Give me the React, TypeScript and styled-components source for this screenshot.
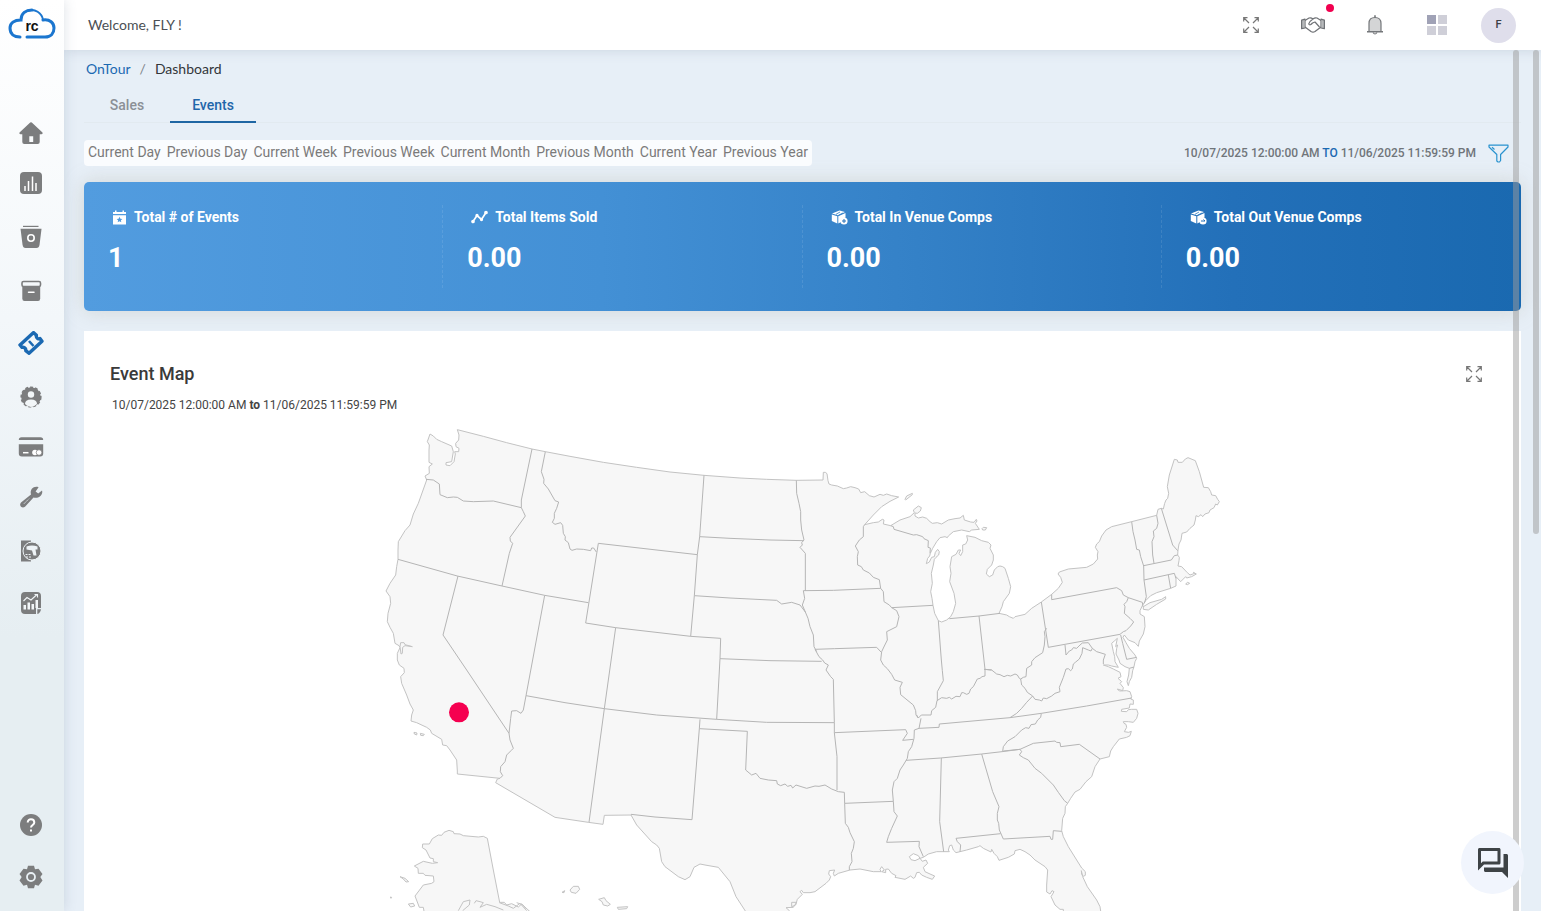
import React from "react";
import styled, { createGlobalStyle, css } from "styled-components";

const GlobalStyle = createGlobalStyle`
  *, *::before, *::after { box-sizing: border-box; }
  body { margin: 0; overflow: hidden; background: #e7eff7; font-family: Roboto, "Liberation Sans", sans-serif; }
  button { font: inherit; color: inherit; border: 0; background: none; padding: 0; cursor: pointer; }
  h2, p, dl, dd, dt, ul { margin: 0; padding: 0; }
  svg { display: block; }
`;

/* ---------- Shell ---------- */

const Shell = styled.div`
  display: flex;
  height: 100vh;
  overflow: hidden;
`;

const Sidebar = styled.nav`
  flex: 0 0 64px;
  display: flex;
  flex-direction: column;
  align-items: center;
  padding: 8px 0 22px;
  background: linear-gradient(#ffffff 0%, #f3f7fa 35%, #e6eef2 70%, #e6eef2 100%);
  box-shadow: 0 0 12px rgba(80, 100, 130, 0.2);
  z-index: 3;
`;

const NavList = styled.ul`
  list-style: none;
  display: flex;
  flex-direction: column;
  width: 64px;
`;

const MainNav = styled(NavList)`
  margin-top: 54px;
  flex: 1;
`;

const navSpace = { tight: 26, normal: 28, wide: 30 };

const NavItem = styled.li<{ $space: keyof typeof navSpace }>`
  display: flex;
  justify-content: center;
  margin-top: ${(p) => navSpace[p.$space]}px;
  height: 24px;
`;

const NavLink = styled.a<{ $active?: boolean }>`
  display: block;
  width: 26px;
  height: 24px;
  margin-right: 2px;
  color: ${(p) => (p.$active ? "#1b69b2" : "#7c7d7e")};
  svg { width: 26px; height: 24px; }
`;

const Column = styled.div`
  flex: 1;
  min-width: 0;
  display: flex;
  flex-direction: column;
`;

const TopBar = styled.header`
  flex: 0 0 50px;
  display: flex;
  align-items: center;
  justify-content: space-between;
  padding: 0 25px 0 24px;
  background: #fff;
  box-shadow: 0 0 12px rgba(80, 100, 130, 0.2);
  z-index: 2;
`;

const Welcome = styled.p`
  font: 14px/20px Lato, sans-serif;
  color: #4b4f54;
`;

const Tools = styled.div`
  display: flex;
  align-items: center;
  gap: 27px;
`;

const ToolButton = styled.button`
  position: relative;
  width: 35px;
  height: 35px;
  display: flex;
  align-items: center;
  justify-content: center;
`;

const Dot = styled.span`
  position: absolute;
  top: -4px;
  right: -4px;
  width: 8px;
  height: 8px;
  border-radius: 50%;
  background: #f1004f;
`;

const Avatar = styled(ToolButton)`
  border-radius: 50%;
  background: #dfdeeb;
  color: #3c3f45;
  font: 500 11px/16px Roboto, sans-serif;
`;

/* ---------- Content ---------- */

const Content = styled.main`
  position: relative;
  flex: 1;
  min-height: 0;
  overflow: hidden;
  padding: 8px 20px 0;
  background: #e7eff7;
`;

const ScrollThumb = styled.span<{ $outer?: boolean }>`
  position: absolute;
  top: 0;
  z-index: 4;
  width: 6px;
  border-radius: 3px;
  background: rgba(155, 155, 155, 0.5);
  ${(p) =>
    p.$outer
      ? css`right: 2px; height: 56.2%;`
      : css`right: 22px; bottom: -4px;`}
`;

const Crumbs = styled.nav`
  display: flex;
  gap: 9px;
  padding-left: 2px;
  font: 14px/22px Lato, sans-serif;
  color: #33363a;
  a { color: #1b69b2; text-decoration: none; }
  i { font-style: normal; color: #7d8389; }
`;

const Tabs = styled.div`
  display: flex;
  margin-top: 9px;
  border-bottom: 1px solid #e2eaf0;
`;

const Tab = styled.button<{ $active?: boolean }>`
  width: 86px;
  height: 34px;
  font: 500 14px/20px Roboto, sans-serif;
  color: ${(p) => (p.$active ? "#1f66aa" : "#8b9096")};
  border-bottom: 2px solid ${(p) => (p.$active ? "#1f66a3" : "transparent")};
  margin-bottom: -1px;
`;

const FilterRow = styled.div`
  display: flex;
  justify-content: space-between;
  align-items: center;
  margin-top: 17px;
  height: 26px;
  padding-right: 12px;
`;

const Periods = styled.div`
  display: flex;
  align-items: flex-start;
  gap: 6px;
  height: 26px;
  padding: 0 4px;
  border-radius: 4px;
  background: #fafcfe;
  color: #7a7a7a;
  font-size: 14px;
  line-height: 24px;
  button { white-space: nowrap; }
`;

const Range = styled.div`
  display: flex;
  align-items: center;
  gap: 12px;
  font-size: 12px;
  line-height: 20px;
  font-weight: 500;
  color: #70757a;
  b { font-weight: 500; color: #1b69b2; }
`;

const Stats = styled.dl`
  display: grid;
  grid-template-columns: repeat(4, 1fr);
  height: 129px;
  margin-top: 16px;
  padding: 23px 0;
  border-radius: 5px;
  color: #fff;
  background: linear-gradient(90deg, #529cdf, #4390d5 36%, #3481c7 58%, #2370b9 80%, #1a69b0);
  box-shadow: 0 0 20px rgba(170, 170, 155, 0.35);
`;

const Stat = styled.div`
  padding: 2px 24px 0;
  border-right: 1px dashed rgba(255, 255, 255, 0.1);
  &:last-child { border-right: 0; }
`;

const StatLabel = styled.dt`
  display: flex;
  align-items: center;
  gap: 7px;
  padding-left: 4px;
  font-size: 14px;
  line-height: 20px;
  font-weight: 700;
`;

const StatValue = styled.dd`
  margin-top: 13px;
  font-size: 27px;
  line-height: 36px;
  font-weight: 700;
`;

const Card = styled.section`
  margin-top: 20px;
  padding-top: 31px;
  background: #fff;
`;

const CardHead = styled.div`
  display: flex;
  align-items: center;
  justify-content: space-between;
  height: 24px;
  padding: 0 39px 0 26px;
  h2 { font-size: 18px; line-height: 24px; font-weight: 500; color: #3a3a3a; }
`;

const CardRange = styled.p`
  margin-top: 9px;
  padding-left: 28px;
  font-size: 12px;
  line-height: 20px;
  color: #444;
  b { font-weight: 700; }
`;

const MapBox = styled.div`
  margin-top: 5px;
  svg { width: 100%; height: auto; }
`;

const ChatButton = styled.button`
  position: absolute;
  right: 17px;
  bottom: 17px;
  z-index: 5;
  width: 63px;
  height: 63px;
  border-radius: 50%;
  display: flex;
  align-items: center;
  justify-content: center;
  background: #f1f5fd;
  color: #3e4346;
`;

/* ---------- Icons ---------- */

const Logo = () => (
  <svg width="48" height="33" viewBox="0 0 48 33" role="img" aria-label="rc">
    <g fill="none" stroke="#1b76cf" strokeWidth="3" strokeLinecap="round">
      <path d="M12 29C6 29 2 26 2 20C2 15 6 12 13 12C13 5 18 2 24 2" />
      <path d="M19 29H37C43 29 46 25 46 20C46 15 42 11 35 12" />
      <path d="M19 3C27 0 34 5 35 12" strokeWidth="2" />
    </g>
    <text x="24" y="23" textAnchor="middle" fontFamily="Liberation Sans, sans-serif" fontWeight="700" fontSize="14" fill="#111">rc</text>
  </svg>
);

const svgProps = { viewBox: "0 0 26 24", "aria-hidden": true } as const;

const HomeIcon = () => (
  <svg {...svgProps} fill="currentColor">
    <path fillRule="evenodd" d="M12.200 1.500Q13 .8 13.800 1.500L24.500 11.500Q25.200 13 23.500 13.300H21.700V21Q21.700 23 19.700 23H6.300Q4.300 23 4.300 21V13.300H2.500Q.8 13 1.500 11.500ZM11.300 15.200V21H15.200V15.200Z" />
  </svg>
);
const BarsIcon = () => (
  <svg {...svgProps}>
    <rect x="2" y="1" width="22" height="22" rx="4" fill="currentColor" />
    <path d="M7 15v5M10.500 10v10M14.500 5.500V20M18 12v8" stroke="#fff" strokeWidth="1.500" />
  </svg>
);
const BinIcon = () => (
  <svg {...svgProps} fill="currentColor">
    <path d="M5 .8H20.500V2H5Z" />
    <path d="M2.500 3.800H23.500L21.500 20Q21 23 18.500 23H7.500Q5 23 4.600 20Z" />
    <circle cx="13" cy="13" r="3.200" fill="none" stroke="#fff" strokeWidth="1.600" />
  </svg>
);
const ArchiveIcon = () => (
  <svg {...svgProps}>
    <rect x="4" y="2.500" width="18.500" height="5" rx="1.500" fill="none" stroke="currentColor" strokeWidth="1.600" />
    <path d="M4.300 8H22.200V19.500Q22.200 22 20 22H6.500Q4.300 22 4.300 19.500Z" fill="currentColor" />
    <path d="M10.500 13.300h5.500" stroke="#fff" strokeWidth="1.500" strokeLinecap="round" />
  </svg>
);
const TicketIcon = () => (
  <svg {...svgProps} fill="none" stroke="currentColor" strokeWidth="3.400" strokeLinejoin="round" strokeLinecap="round">
    <path d="M15.600 1.600L18.400 4.300Q18 6.400 19.400 7.300Q20.700 8.200 22 7.600L24 10.200L11 22.300L7.800 19.600Q8 17.800 6.700 16.800Q5.400 15.900 4 16.300L2 14Z" />
    <path d="M11 10l4.500 5" strokeWidth="2.600" strokeLinecap="butt" />
  </svg>
);
const UserBadgeIcon = () => (
  <svg {...svgProps}>
    <circle cx="13" cy="12" r="9.800" fill="currentColor" stroke="currentColor" strokeWidth="1.600" strokeDasharray="3 2" />
    <circle cx="13" cy="9.500" r="3.200" fill="#f2f6f8" />
    <path d="M7 19Q7 14.500 13 14.500Q19 14.500 19 19Q16 22 13 22Q10 22 7 19Z" fill="#f2f6f8" />
  </svg>
);
const CardIcon = () => (
  <svg {...svgProps}>
    <path d="M.800 5Q.800 2.300 3.500 2.300H22.500Q25.200 2.300 25.200 5ZM.800 9.300H25.200V18.500Q25.200 21.500 22.200 21.500H3.800Q.800 21.500.800 18.500Z" fill="currentColor" />
    <path d="M5 17.700h5.500" stroke="#fff" strokeWidth="1.500" />
    <circle cx="17" cy="17.500" r="2.800" fill="#fff" />
    <circle cx="21" cy="17.500" r="2.800" fill="#fff" stroke="currentColor" strokeWidth=".7" />
  </svg>
);
const WrenchIcon = () => (
  <svg {...svgProps}>
    <path d="M24 5.500L20.200 8.600L17.600 6.400L20.600 2.200C16.500.500 11.500 3.500 13 9.500L3 17.500C.500 20.500 4 24 7 21.700L15.500 12.600C21 14 25.500 9.500 24 5.500Z" fill="currentColor" />
    <path d="M6 18.700l5-5" stroke="#dfe6ea" strokeWidth="1" strokeDasharray="2 1" />
  </svg>
);
const ScannerIcon = () => (
  <svg {...svgProps}>
    <path d="M3 1.500H13V22.500H3Z" fill="currentColor" />
    <circle cx="14" cy="12" r="9" fill="currentColor" stroke="#eef3f6" strokeWidth="1" />
    <path d="M8.500 7.500Q14 5.500 19.500 7.500V10.500H17.500L18.500 16.500H15.500L14 11.500L8.500 10.500Z" fill="#eef3f6" />
    <path d="M7.500 15.500h5M8 18h5" stroke="#eef3f6" strokeDasharray="2 1" />
  </svg>
);
const ReportIcon = () => (
  <svg {...svgProps}>
    <path d="M7 1H19Q23 1 23 5V17H18V23H7Q3 23 3 19V5Q3 1 7 1Z" fill="currentColor" />
    <path d="M19.300 18.200H23Q22.500 22 19.300 23Z" fill="currentColor" />
    <path d="M5.500 10l3.500-3.500 4 2.500 6-5.500M16.500 3.500H19.500V6.500" fill="none" stroke="#f2f6f8" strokeWidth="1.100" />
    <path d="M5.500 14h2.500v4.500h-2.500ZM9.500 11.500h2.500v7h-2.500ZM13.500 13h2.500v5.500h-2.500ZM17.500 9h2.500v8h-2.500Z" fill="#f2f6f8" />
  </svg>
);
const HelpIcon = () => (
  <svg {...svgProps}>
    <circle cx="13" cy="12" r="11" fill="currentColor" />
    <path d="M9.700 9.600C9.700 5 16.300 5.500 16.300 9.500C16.300 12 13 12 13 14.500M13 16.500v2" fill="none" stroke="#fff" strokeWidth="2" />
  </svg>
);
const GearIcon = () => (
  <svg {...svgProps}>
    <path d="M10 .8H16L17 4.300L20.500 3.700L24.500 9L22.300 12L24.500 15.500L20.500 20.700L17 19.700L16 23.200H10L9 19.700L5.500 20.700L1.500 15.500L3.700 12L1.500 9L5.500 3.700L9 4.300Z" fill="currentColor" />
    <circle cx="13" cy="12" r="4" fill="none" stroke="#e9f0f4" strokeWidth="1.800" />
  </svg>
);

const ExpandIcon = () => (
  <svg width="16" height="16" viewBox="0 0 16 16" fill="none" stroke="#777" strokeWidth="1.200" aria-hidden>
    <path d="M.7 4.500V.7H4.500M11.500 .7h3.800V4.500M.7 11.500v3.800H4.500M11.500 15.300h3.800V11.500M1 1l5 5M15 1L10 6M1 15l5-5M15 15L10 10" />
  </svg>
);
const HandshakeIcon = () => (
  <svg width="24" height="16" viewBox="0 0 24 16" fill="none" stroke="#6f7276" strokeWidth="1.200" strokeLinejoin="round" aria-hidden>
    <path d="M.6 3.200L4 2.200V11L.6 11.600ZM23.400 3.200L20 2.200V11L23.400 11.600Z" />
    <path d="M2 3v8.500M22 3v8.500" strokeWidth="1" />
    <path d="M4 3.500L8 1Q10 .3 12 2Q14 .3 16 1L20 3.500M4 10L10 14.500Q12 15.800 14 14.500L20 10M12 2Q9 3.800 7.700 7Q9 9 11.500 6L14 5L18.500 10" />
  </svg>
);
const BellIcon = () => (
  <svg width="18" height="20" viewBox="0 0 18 20" stroke="#74777a" strokeWidth="1.200" aria-hidden>
    <path d="M7 17.500Q9 20.500 11 17.500" fill="none" />
    <path d="M3 16.500V8.500Q3 2.500 9 2.500Q15 2.500 15 8.500V16.500Z" fill="#d4d5d6" />
    <path d="M1 16.800H17M9 .3V2.500" strokeWidth="1.600" />
  </svg>
);
const GridIcon = () => (
  <svg width="20" height="20" viewBox="0 0 20 20" fill="#cfcfd8" aria-hidden>
    <path d="M0 0h9v9H0Z" fill="#a0a2b6" />
    <path d="M11 0h9v9h-9ZM0 11h9v9H0ZM11 11h9v9h-9Z" />
  </svg>
);
const FunnelIcon = () => (
  <svg width="21" height="19" viewBox="0 0 21 19" fill="none" stroke="#2a93cf" strokeWidth="1.200" strokeLinejoin="round" aria-hidden>
    <path d="M1 1.200H20V3L12.600 10.500V16.500L11.500 18H10L8.800 17V10.500L1 3ZM4 3.300L6.500 5.500" />
  </svg>
);
const CalendarIcon = () => (
  <svg width="15" height="15" viewBox="0 0 15 15" fill="#fff" aria-hidden>
    <path d="M3 .5h1.500V2h6V.5H12V2h2v2H1V2H3Z" />
    <path fillRule="evenodd" d="M1 5.300h13V14.500H1ZM7.500 6.800l-.9 1.900-2 .2 1.500 1.400-.4 2 1.800-1 1.800 1-.4-2 1.500-1.400-2-.2Z" />
  </svg>
);
const TrendIcon = () => (
  <svg width="17" height="14" viewBox="0 0 17 14" fill="#fff" stroke="#fff" strokeWidth="1.700" aria-hidden>
    <path d="M2 11.500L6 5.500L10.500 9.500L15 2.500" fill="none" />
    <circle cx="2" cy="11.500" r="1" /><circle cx="6" cy="5.500" r=".8" /><circle cx="10.500" cy="9.500" r=".8" /><circle cx="15" cy="2.500" r="1" />
  </svg>
);
const BoxIcon = ({ out }: { out?: boolean }) => (
  <svg width="17" height="15" viewBox="0 0 17 15" fill="#fff" aria-hidden>
    <path d="M1 3.500L8.500 .5L14 2L7 5.200ZM.8 4.500L6.300 6.300V13.500L.8 11Z" />
    <path d="M7.300 6.300L14.500 3V7.500L10 9.500V12L7.300 13.500Z" />
    <path d="M9 2l-4 2.300M12 3L7.500 5.200" stroke="#2f7dc4" strokeWidth=".8" />
    <circle cx="13" cy="11" r="3.600" />
    <path d={out ? "M11 11h4l-1.500-1.500" : "M13 9v4M11 11h4"} stroke="#2470b8" strokeWidth="1" fill="none" />
  </svg>
);
const ForumIcon = () => (
  <svg width="36" height="36" viewBox="0 0 24 24" fill="currentColor" aria-hidden>
    <path d="M15 4v7H5.170L4 12.170V4h11m1-2H3c-.550 0-1 .450-1 1v14l4-4h10c.550 0 1-.450 1-1V3c0-.550-.450-1-1-1zm5 4h-2v9H6v2c0 .550.450 1 1 1h11l4 4V7c0-.550-.450-1-1-1z" />
  </svg>
);

/* ---------- Map ---------- */

/** Map sheets: every line is drawn in its sheet's own units, then moved to the sheet's origin. */
const origins = { nw: [0, 0], sw: [0, 720], n: [990, 60], s: [990, 750], ne: [1830, 60], se: [1830, 660] } as const;
type Sheet = keyof typeof origins;

const place = (sheet: Sheet, line: string) => {
  const [ox, oy] = origins[sheet];
  return line
    .trim()
    .split(/\s+/)
    .map((pair) => {
      const [x, y] = pair.split(",").map(Number);
      return `${x + ox},${y + oy}`;
    })
    .join(" ");
};

const coast: [Sheet, string][] = [
  ["nw", "262,29 340,49 410,68 486,87 526,95 600,109 700,127 800,142 900,156 1002,166"],
  ["n", "120,114 200,118 289,121 369,120 370,97 376,97 381,101 384,122 387,132 395,135 412,138 430,146 440,144 452,140 465,143 476,147 482,158 494,155 508,167 522,171 540,163 550,166 560,162 575,167 596,171 570,184 545,200 520,225 494,254 520,248 535,246 547,238 552,240 550,252 572,257 600,240 630,230 643,218 640,210 655,198 664,203 661,213 652,220 645,219 645,228 655,234 668,231 680,235 690,245 697,250 712,248 725,252 745,240 765,236 780,234 790,226 793,240 812,246 822,247 829,238 831,243 826,250 838,268 815,270 808,275 785,270 760,275 745,288 742,293 735,290 720,293 710,305 698,325 691,340 689,348 683,355 679,371 688,366 695,352 703,350 706,337 713,328 718,335 716,345 708,352 703,358 700,375 694,400 697,430 692,455 696,475 699,496 704,520 715,542 725,546 740,540 752,530 760,515 767,490 762,460 749,425 753,400 750,380 755,350 768,343 775,330 782,330 777,340 782,347 788,335 788,315 797,312 803,300 800,287 825,292 845,302 865,307 873,315 870,325 880,345 880,360 875,375 862,388 859,402 868,410 878,405 883,390 893,380 900,378"],
  ["ne", "68,380 75,385 85,415 92,440 88,460 70,485 66,500 57,520 80,525 88,530 100,535 105,530 135,523 155,505 184,486 215,463 235,445 247,427 242,412 234,402 238,396 265,387 320,382 340,372 353,357 352,345 354,335 346,322 350,312 358,305 365,288 378,270 395,260 455,245 530,226 534,208 544,205 550,207 554,190 558,180 563,175 566,160 562,140 568,105 583,58 592,60 594,67 607,67 616,57 624,53 646,62 658,95 671,142 685,143 692,155 695,165 707,167 713,178 718,185 712,195 707,192 702,203 690,210 687,218 675,222 668,230 663,224 655,230 648,227 646,240 642,255 630,265 620,276 606,280 603,300 597,312 594,330 593,345 598,352 597,362 594,378 605,380 622,398 630,405 644,400 640,397 649,402 635,410 620,414 617,410 602,425 588,410 588,438 572,445 530,458 512,467 497,482 487,497 480,512 480,522 493,530 495,560 490,582 478,603 475,619 465,608 445,600 433,585 429,592 438,608 448,625 465,645 470,655"],
  ["se", "465,65 462,80 458,92 455,112 448,125 445,137 441,125 446,105 448,85 435,80 420,70 417,60 408,42 410,25 413,15 407,20 412,-5 403,3 395,10 400,35 404,50 405,65 415,82 395,78 385,75 370,75 385,80 400,87 420,97 423,110 414,115 425,125 420,130 430,143 428,152 412,147 418,153 440,152 450,155 455,170 452,177 460,180 460,193 450,192 448,204 425,208 424,214 440,215 445,209 455,208 470,208 474,220 470,235 460,247 445,245 430,245 432,250 438,253 440,262 433,275 446,277 454,274 450,287 440,292 418,297 400,320 392,333 388,350 360,357 345,380 335,410 318,425 300,448 285,456 272,475 263,490 256,500 255,520 248,535 245,572 250,590 265,620 290,660 305,684 316,695 316,706 310,709 305,702 304,692 308,710 322,740 350,780 360,800 362,813 366,860 250,860 250,808 240,808 225,795 213,770 222,755 216,752 210,762 200,756 200,735 203,690 195,680 165,660 150,645 135,635 120,628 105,632 103,642 85,652 57,661 52,650 42,640 35,628 33,636 10,625 0,617"],
  ["s", "835,530 800,540 780,545 768,548 760,540 755,525 749,527 745,540 748,545 710,545 685,552 670,562 660,565 655,557 640,551 628,560 633,569 645,572 660,565 667,574 678,570 683,580 670,592 675,605 690,612 704,618 697,628 680,622 665,615 658,607 650,608 645,622 640,625 632,618 615,628 600,625 585,622 588,617 575,610 565,597 557,598 557,608 545,605 553,600 545,590 540,598 543,605 520,605 480,597 450,600 415,610 403,618 400,610 404,600 388,602 386,612 392,620 388,630 378,640 345,665 330,668 310,668 305,661 300,665 307,673 292,688 287,705 275,710 275,697 290,697 280,712 258,713 268,722 240,760 160,750 136,723 108,680 90,635 55,592 15,585 0,582"],
  ["sw", "972,622 960,650 945,659 925,650 885,620 875,605 868,565 860,555 845,545 800,495 783,465 703,466 699,493 655,487 555,472 377,368 382,357 390,355 262,342 262,333 260,300 240,270 230,257 218,255 215,238 185,220 181,210 170,202 140,188 123,183 125,165 130,150 120,132 110,105 95,70 92,50 103,38 102,25 88,15 82,0"],
  ["nw", "82,700 90,683 87,677 75,670 70,640 60,622 52,605 54,580 62,550 60,530 48,513 60,490 77,465 80,440 84,418 84,390 85,365 105,332 120,315 130,282 145,250 170,180 165,168 178,160 177,140 187,132 177,127 177,90 178,75 172,65 180,42 190,48 200,58 215,65 245,78 250,95 245,125 228,128 228,135 240,137 252,125 256,102 254,95 266,95 267,85 258,80 257,70 266,60 267,45"],
];

const borders: [Sheet, string][] = [
  ["nw", "168,178 190,180 208,192 210,224 232,233 250,231 262,232 280,243 310,245 370,243 454,263"],
  ["nw", "486,87 454,240 454,263 460,275 466,288 420,352 421,363 428,370 418,400 396,498"],
  ["nw", "84,418 262,468 396,498 524,526 655,548"],
  ["nw", "526,95 514,155 522,178 521,190 535,207 555,242 566,246 560,265 553,280 553,295 547,307 555,313 572,308 578,316 580,340 586,350 585,360 595,368 600,387 606,391 620,387 640,388 662,392 665,384 671,384 679,396"],
  ["nw", "647,609 737,623 962,649 973,527 982,404 685,370 647,609"],
  ["nw", "1002,166 989,350 982,404"],
  ["nw", "989,350 1080,355 1200,360 1300,362"],
  ["nw", "973,527 1080,534 1220,541 1235,552 1265,547 1290,555 1306,576"],
  ["nw", "962,649 1052,655 1050,716 1040,898"],
  ["nw", "1050,716 1200,722 1355,724"],
  ["nw", "264,468 219,645 290,750 417,940"],
  ["nw", "524,526 468,827 460,870 453,880 440,872 425,873 422,895 417,940 420,960 430,985 423,992 410,1005 405,1025 392,1040 391,1055 398,1067 390,1075"],
  ["nw", "737,623 703,866 657,1207"],
  ["nw", "468,827 585,848 703,866 860,885 1040,898 1190,907 1393,908"],
  ["nw", "990,898 988,926 966,1199 855,1191 783,1183"],
  ["nw", "988,926 1132,934 1127,1050"],
  ["s", "137,300 155,315 168,310 180,325 205,330 230,332 232,342 242,347 255,342 263,349 273,346 278,354 288,345 320,355 345,348 357,349 375,345 395,357 415,365 433,367"],
  ["s", "403,158 403,188 411,260 411,360"],
  ["n", "345,628 357,650 368,660 374,669 385,675 378,690 392,710 400,718 403,848"],
  ["s", "403,188 617,179 622,190 608,211 640,208"],
  ["s", "433,367 434,400 436,460 445,472 450,488 463,515 460,535 454,550 456,575 448,590 448,600"],
  ["s", "434,400 580,394"],
  ["s", "663,145 657,175 643,180 642,205 635,230 625,245 622,265 610,285 600,300 592,325 582,335 577,360 580,394 582,425 592,438 575,475 565,500 560,517 658,514 657,530 670,560"],
  ["s", "618,271 722,264 845,252 906,245 960,238"],
  ["s", "724,264 719,455 731,545"],
  ["se", "5,342 38,455 57,500 52,520 52,540 56,550 58,570 70,597 210,589 213,598 218,598 220,572 245,574"],
  ["s", "780,545 782,525 772,515 768,505 902,491"],
  ["se", "120,328 125,335 118,345 130,353 145,360 165,385 185,400 220,435 235,457 253,482 263,490"],
  ["se", "70,333 120,328 160,310 225,303 230,307 240,308 242,320 298,313 360,357"],
  ["se", "68,334 70,320 83,303 105,290 125,270 137,263 147,265 153,254 166,252 173,240 182,232 184,220"],
  ["se", "455,174 320,198 184,220 90,233 0,241 -122,252 -123,262 -183,265"],
  ["se", "90,233 110,220 125,205 140,187 158,168"],
  ["se", "158,168 165,178 178,180 185,183 190,174 200,176 215,168 225,160 240,155 238,142 250,112 258,87 265,86 272,92 277,87 280,72 286,67 298,57 306,40 308,23 325,30 333,33 337,25 350,35 360,38 376,43 370,60 370,72"],
  ["se", "158,168 142,157 135,145 125,135 122,117 130,112 138,110 140,85 155,75 155,65 165,53 188,38 193,15 195,-10 193,-25 200,-35"],
  ["ne", "184,486 205,622 420,583 430,575 438,572 452,558 461,546 450,535 433,520 435,500 432,493 440,485 445,473 430,465 425,452 410,443 215,479 215,463"],
  ["ne", "445,473 487,487 489,500"],
  ["ne", "455,245 459,275 465,300 470,328 478,330 482,350 491,378 492,420 499,470 493,490"],
  ["ne", "530,226 534,250 530,265 520,273 522,290 516,305 518,345 522,370"],
  ["ne", "544,205 578,315 593,332"],
  ["ne", "491,377 574,360 583,347 593,345"],
  ["ne", "492,420 583,400 588,415"],
  ["ne", "565,405 572,445"],
  ["se", "255,15 258,45 268,33 275,30 280,23 290,25 300,15 307,9 325,8 332,18 337,25"],
  ["se", "422,-15 428,10 440,58 470,52"],
  ["se", "448,85 462,81"],
  ["n", "837,528 855,688 875,690"],
  ["n", "715,542 724,660 727,692 730,722 712,755 712,782"],
  ["s", "650,135 655,144 664,135 693,135 695,122 707,112 711,92 725,83 740,85 748,82 755,87 768,79 780,80 785,68 790,68 800,73 807,70 812,57 820,50 832,27 840,25 846,20 855,18 855,-2"],
  ["se", "12,88 35,90 50,102 60,104 72,110 82,106 92,108 105,102 112,105 118,115 122,117"],
  ["n", "748,536 837,528 900,520"],
  ["n", "572,257 580,260 582,268 640,285 650,284 668,290 672,296 685,302 684,322 691,324 690,340"],
  ["n", "494,254 490,260 490,290 478,300 466,318 475,335 472,350 473,375 484,380 490,390 508,399 520,412 538,419 542,445"],
  ["n", "310,452 400,451 542,445"],
  ["n", "289,121 290,160 297,190 302,215 302,240 305,270 312,300 305,308 307,315 300,322 316,340 316,452"],
  ["n", "310,452 314,475 307,495 316,516 324,535 330,560 340,585 342,620 350,635"],
  ["n", "345,628 404,626 530,622 543,636"],
  ["n", "542,445 550,455 552,485 568,495 575,503 590,512 597,530 590,560 560,575 562,600 553,618 545,635 542,660 550,675 562,686 575,703 584,720 607,727 600,742 602,764 640,795 647,812 648,825 655,834"],
  ["n", "575,503 699,496"],
];

const islands: [Sheet, string][] = [
  ["ne", "490,508 490,500 510,488 545,478 557,470 557,477 530,493 505,510"],
  ["n", "615,178 620,168 637,160 637,164 617,180"],
  ["n", "846,266 850,262 860,263 856,270 848,270"],
  ["ne", "617,432 623,427 629,430 622,434"],
  ["sw", "132,217 141,219 140,225 133,222"],
  ["sw", "151,220 163,223 160,227 152,226"],
  ["sw", "600,690 610,679 625,679 629,688 618,700 604,697"],
  ["sw", "576,697 584,692 582,698"],
  ["sw", "686,718 703,713 708,722 721,733 713,738 700,735 696,725"],
  ["sw", "742,742 773,740 770,746 745,748"],
  ["sw", "90,650 105,655 116,665 108,666 100,657"],
  ["sw", "61,711 65,712 63,715"],
  ["sw", "115,732 130,730 134,738 122,741"],
  ["nw", "90,680 92,668 102,668 105,674 127,680 105,677 98,682 97,700 93,702"],
  ["sw", "237,511 250,515 252,521 270,522 280,527 325,531 340,529 352,535 370,630 389,727 403,727 410,735 425,731 445,741 455,732 480,755 500,800 170,800 160,742 148,742 135,708 160,675 185,670 192,665 190,648 165,646 160,640 145,640 144,625 133,618 160,604 187,610 203,608 190,605 190,596 180,594 168,570 157,563 158,552 178,552 187,536 205,525 215,526 222,517"],
];

const alaskaInlets = [
  "265,752 280,725 300,720 298,735 278,752",
  "313,730 318,722 330,725 340,728 330,742 350,733 375,740 400,750",
  "388,728 415,738 430,745 450,730 470,752",
  "440,728 458,734 468,746",
];

const UsMap = () => (
  <svg viewBox="-858 0 4311 1476" role="img" aria-label="Map of events by state">
    <g strokeWidth="3" strokeLinejoin="round" fill="none">
      <polygon points={coast.map(([s, l]) => place(s, l)).join(" ")} fill="#f7f7f7" stroke="#c3c3c3" />
      {islands.map(([s, l]) => (
        <polygon key={l} points={place(s, l)} fill="#f7f7f7" stroke="#c3c3c3" />
      ))}
      {alaskaInlets.map((l) => (
        <polyline key={l} points={place("sw", l)} stroke="#c3c3c3" />
      ))}
      {borders.map(([s, l]) => (
        <polyline key={l} points={place(s, l)} stroke="#b5b5b5" />
      ))}
    </g>
    <circle cx="267" cy="877" r="30" fill="#f50050" />
  </svg>
);

/* ---------- Page ---------- */

const nav: { label: string; icon: React.ReactNode; space: keyof typeof navSpace; active?: boolean }[] = [
  { label: "Home", icon: <HomeIcon />, space: "tight" },
  { label: "Analytics", icon: <BarsIcon />, space: "tight" },
  { label: "Stock", icon: <BinIcon />, space: "wide" },
  { label: "Archive", icon: <ArchiveIcon />, space: "wide" },
  { label: "OnTour", icon: <TicketIcon />, space: "normal", active: true },
  { label: "Customers", icon: <UserBadgeIcon />, space: "wide" },
  { label: "Payments", icon: <CardIcon />, space: "tight" },
  { label: "Tools", icon: <WrenchIcon />, space: "tight" },
  { label: "Scanner", icon: <ScannerIcon />, space: "wide" },
  { label: "Reports", icon: <ReportIcon />, space: "normal" },
];

const periods = ["Day", "Week", "Month", "Year"].flatMap((p) => [`Current ${p}`, `Previous ${p}`]);

const stats = [
  { label: "Total # of Events", value: "1", icon: <CalendarIcon /> },
  { label: "Total Items Sold", value: "0.00", icon: <TrendIcon /> },
  { label: "Total In Venue Comps", value: "0.00", icon: <BoxIcon /> },
  { label: "Total Out Venue Comps", value: "0.00", icon: <BoxIcon out /> },
];

export default function App() {
  return (
    <Shell>
      <GlobalStyle />
      <Sidebar aria-label="Main">
        <Logo />
        <MainNav>
          {nav.map((n) => (
            <NavItem key={n.label} $space={n.space}>
              <NavLink href="#" aria-label={n.label} $active={n.active}>{n.icon}</NavLink>
            </NavItem>
          ))}
        </MainNav>
        <NavList>
          <NavItem $space="normal"><NavLink href="#" aria-label="Help"><HelpIcon /></NavLink></NavItem>
          <NavItem $space="normal"><NavLink href="#" aria-label="Settings"><GearIcon /></NavLink></NavItem>
        </NavList>
      </Sidebar>
      <Column>
        <TopBar>
          <Welcome>Welcome, FLY !</Welcome>
          <Tools>
            <ToolButton aria-label="Full screen"><ExpandIcon /></ToolButton>
            <ToolButton aria-label="Partners"><HandshakeIcon /><Dot /></ToolButton>
            <ToolButton aria-label="Notifications"><BellIcon /></ToolButton>
            <ToolButton aria-label="Apps"><GridIcon /></ToolButton>
            <Avatar>F</Avatar>
          </Tools>
        </TopBar>
        <Content>
          <Crumbs aria-label="Breadcrumb">
            <a href="#">OnTour</a>
            <i>/</i>
            <span>Dashboard</span>
          </Crumbs>
          <Tabs role="tablist">
            <Tab role="tab" aria-selected={false}>Sales</Tab>
            <Tab role="tab" aria-selected $active>Events</Tab>
          </Tabs>
          <FilterRow>
            <Periods>
              {periods.map((p) => <button key={p}>{p}</button>)}
            </Periods>
            <Range>
              <span>10/07/2025 12:00:00 AM <b>TO</b> 11/06/2025 11:59:59 PM</span>
              <button aria-label="Filter"><FunnelIcon /></button>
            </Range>
          </FilterRow>
          <Stats>
            {stats.map((s) => (
              <Stat key={s.label}>
                <StatLabel>{s.icon}{s.label}</StatLabel>
                <StatValue>{s.value}</StatValue>
              </Stat>
            ))}
          </Stats>
          <Card>
            <CardHead>
              <h2>Event Map</h2>
              <button aria-label="Expand map"><ExpandIcon /></button>
            </CardHead>
            <CardRange>10/07/2025 12:00:00 AM <b>to</b> 11/06/2025 11:59:59 PM</CardRange>
            <MapBox><UsMap /></MapBox>
          </Card>
          <ScrollThumb />
          <ScrollThumb $outer />
          <ChatButton aria-label="Chat"><ForumIcon /></ChatButton>
        </Content>
      </Column>
    </Shell>
  );
}
